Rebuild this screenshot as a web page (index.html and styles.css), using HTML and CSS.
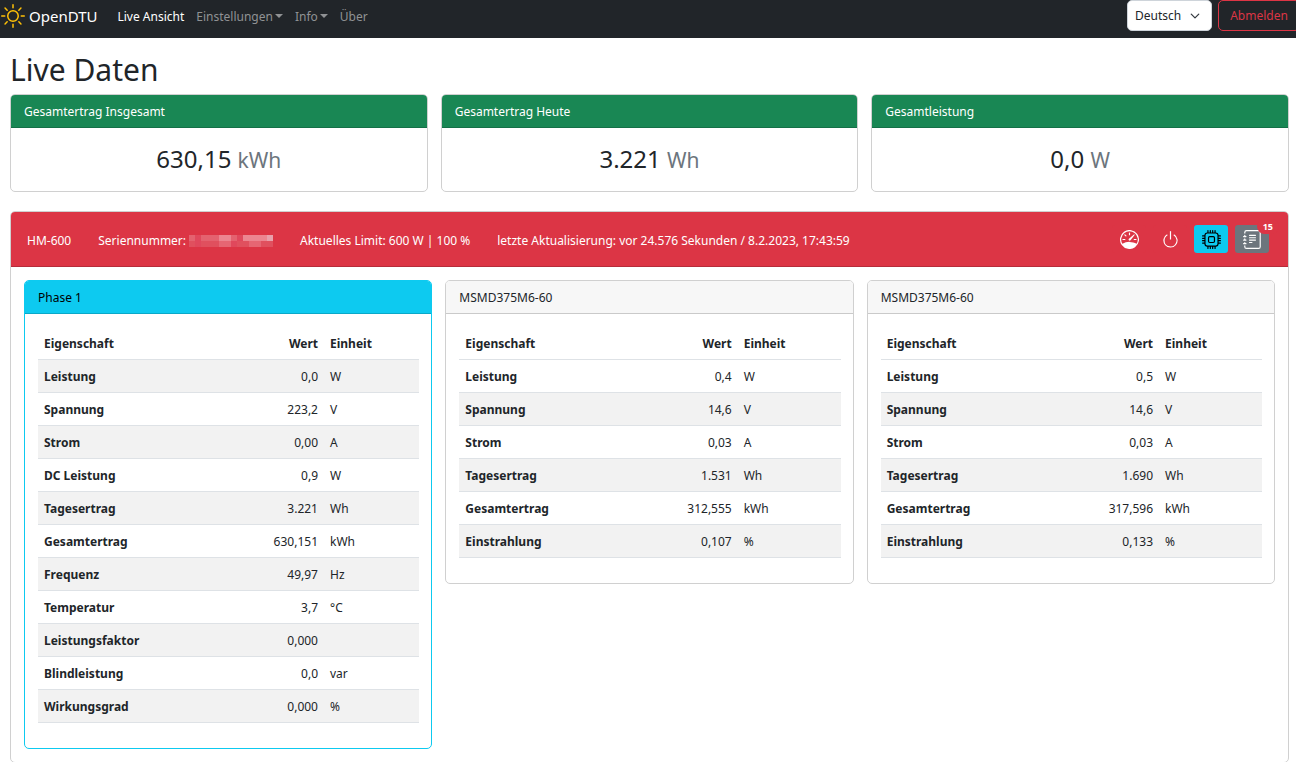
FILE: index.html
```html
<!DOCTYPE html>
<html lang="de">
    <head>
        <meta charset="UTF-8">
        <meta name="viewport" content="width=device-width, initial-scale=1.0">
        <title>OpenDTU</title>
        <link rel="stylesheet" href="styles.css">
    </head>
    <body>
        <nav class="navbar">
            <a class="brand" href="#">
                <svg class="brand-icon" viewBox="0 0 16 16" fill="currentColor" aria-hidden="true">
                    <path d="M8 11a3 3 0 1 1 0-6 3 3 0 0 1 0 6zm0 1a4 4 0 1 0 0-8 4 4 0 0 0 0 8zM8 0a.5.5 0 0 1 .5.5v2a.5.5 0 0 1-1 0v-2A.5.5 0 0 1 8 0zm0 13a.5.5 0 0 1 .5.5v2a.5.5 0 0 1-1 0v-2A.5.5 0 0 1 8 13zm8-5a.5.5 0 0 1-.5.5h-2a.5.5 0 0 1 0-1h2a.5.5 0 0 1 .5.5zM3 8a.5.5 0 0 1-.5.5h-2a.5.5 0 0 1 0-1h2A.5.5 0 0 1 3 8zm10.657-5.657a.5.5 0 0 1 0 .707l-1.414 1.415a.5.5 0 1 1-.707-.708l1.414-1.414a.5.5 0 0 1 .707 0zm-9.193 9.193a.5.5 0 0 1 0 .707L3.05 13.657a.5.5 0 0 1-.707-.707l1.414-1.414a.5.5 0 0 1 .707 0zm9.193 2.121a.5.5 0 0 1-.707 0l-1.414-1.414a.5.5 0 0 1 .707-.707l1.414 1.414a.5.5 0 0 1 0 .707zM4.464 4.465a.5.5 0 0 1-.707 0L2.343 3.05a.5.5 0 1 1 .707-.707l1.414 1.414a.5.5 0 0 1 0 .708z"/>
                </svg>
                OpenDTU
            </a>
            <div class="nav-links">
                <a class="nav-link active" href="#">Live Ansicht</a>
                <a class="nav-link dropdown" href="#">Einstellungen</a>
                <a class="nav-link dropdown" href="#">Info</a>
                <a class="nav-link" href="#">Über</a>
            </div>
            <select class="language" aria-label="Sprache">
                <option>Deutsch</option>
                <option>English</option>
            </select>
            <button class="logout" type="button">Abmelden</button>
        </nav>

        <main class="container">
            <h1>Live Daten</h1>

            <div class="totals">
                <div class="card">
                    <div class="card-header success">Gesamtertrag Insgesamt</div>
                    <h2>630,15 <small>kWh</small></h2>
                </div>
                <div class="card">
                    <div class="card-header success">Gesamtertrag Heute</div>
                    <h2>3.221 <small>Wh</small></h2>
                </div>
                <div class="card">
                    <div class="card-header success">Gesamtleistung</div>
                    <h2>0,0 <small>W</small></h2>
                </div>
            </div>

            <div class="card">
                <div class="inverter-header">
                    <div class="inverter-info">
                        <span>HM-600</span>
                        <span class="serial">Seriennummer:
                            <svg class="serial-mask" viewBox="0 0 14 2" preserveAspectRatio="none" shape-rendering="crispEdges" aria-hidden="true">
                                <path fill="#e4626f" d="M0 0h14v1H0z"/>
                                <path fill="#e0505e" d="M0 1h14v1H0z"/>
                                <path fill="#ec8590" d="M5 0h2v1H5zM9 0h4v1H9z"/>
                                <path fill="#e9a0ab" d="M13 0h1v1h-1z"/>
                                <path fill="#e0485c" d="M1 0h1v1H1zM8 0h1v1H8zM1 1h1v1H1zM7 1h1v1H7z"/>
                                <path fill="#e66673" d="M5 1h2v1H5zM10 1h2v1h-2z"/>
                            </svg>
                        </span>
                        <span>Aktuelles Limit: 600 W | 100 %</span>
                        <span>letzte Aktualisierung: vor 24.576 Sekunden / 8.2.2023, 17:43:59</span>
                    </div>
                    <div class="toolbar">
                        <button class="btn danger" type="button" aria-label="Limit">
                            <svg viewBox="0 0 16 16" fill="currentColor">
                                <path d="M8 2a.5.5 0 0 1 .5.5V4a.5.5 0 0 1-1 0V2.500A.5.5 0 0 1 8 2zM3.732 3.732a.5.5 0 0 1 .707 0l.915.914a.5.5 0 1 1-.708.708l-.914-.915a.5.5 0 0 1 0-.707zM2 8a.5.5 0 0 1 .5-.5h1.586a.5.5 0 0 1 0 1H2.500A.5.5 0 0 1 2 8zm9.500 0a.5.5 0 0 1 .5-.5h1.500a.5.5 0 0 1 0 1H12a.5.5 0 0 1-.5-.5zm.754-4.246a.389.389 0 0 0-.527-.020L7.547 7.310A.910.910 0 1 0 8.850 8.569l3.434-4.297a.389.389 0 0 0-.029-.518z"/>
                                <path fill-rule="evenodd" d="M6.664 15.889A8 8 0 1 1 9.336.110a8 8 0 0 1-2.672 15.780zm-4.665-4.283A11.945 11.945 0 0 1 8 10c2.186 0 4.236.585 6.001 1.606a7 7 0 1 0-12.002 0z"/>
                            </svg>
                        </button>
                        <button class="btn danger" type="button" aria-label="Ein/Aus">
                            <svg viewBox="0 0 16 16" fill="currentColor">
                                <path d="M7.500 1v7h1V1h-1z"/>
                                <path d="M3 8.812a4.999 4.999 0 0 1 2.578-4.375l-.485-.874A6 6 0 1 0 11 3.616l-.501.865A5 5 0 1 1 3 8.812z"/>
                            </svg>
                        </button>
                        <button class="btn info" type="button" aria-label="Geräteinfo">
                            <svg viewBox="0 0 16 16" fill="currentColor">
                                <path d="M5 0a.5.5 0 0 1 .5.5V2h1V.5a.5.5 0 0 1 1 0V2h1V.5a.5.5 0 0 1 1 0V2h1V.5a.5.5 0 0 1 1 0V2A2.500 2.500 0 0 1 14 4.500h1.500a.5.5 0 0 1 0 1H14v1h1.500a.5.5 0 0 1 0 1H14v1h1.500a.5.5 0 0 1 0 1H14v1h1.500a.5.5 0 0 1 0 1H14a2.500 2.500 0 0 1-2.500 2.500v1.500a.5.5 0 0 1-1 0V14h-1v1.500a.5.5 0 0 1-1 0V14h-1v1.500a.5.5 0 0 1-1 0V14h-1v1.500a.5.5 0 0 1-1 0V14A2.500 2.500 0 0 1 2 11.500H.5a.5.5 0 0 1 0-1H2v-1H.5a.5.5 0 0 1 0-1H2v-1H.5a.5.5 0 0 1 0-1H2v-1H.5a.5.5 0 0 1 0-1H2A2.500 2.500 0 0 1 4.500 2V.5A.5.5 0 0 1 5 0zm-.5 3A1.500 1.500 0 0 0 3 4.500v7A1.500 1.500 0 0 0 4.500 13h7a1.500 1.500 0 0 0 1.500-1.500v-7A1.500 1.500 0 0 0 11.500 3h-7zM5 6.500A1.500 1.500 0 0 1 6.500 5h3A1.500 1.500 0 0 1 11 6.500v3A1.500 1.500 0 0 1 9.500 11h-3A1.500 1.500 0 0 1 5 9.500v-3zM6.500 6a.5.5 0 0 0-.5.5v3a.5.5 0 0 0 .5.5h3a.5.5 0 0 0 .5-.5v-3a.5.5 0 0 0-.5-.5h-3z"/>
                            </svg>
                        </button>
                        <button class="btn secondary" type="button" aria-label="Ereignisse">
                            <svg viewBox="0 0 16 16" fill="currentColor">
                                <path d="M5 10.500a.5.5 0 0 1 .5-.5h2a.5.5 0 0 1 0 1h-2a.5.5 0 0 1-.5-.5zm0-2a.5.5 0 0 1 .5-.5h5a.5.5 0 0 1 0 1h-5a.5.5 0 0 1-.5-.5zm0-2a.5.5 0 0 1 .5-.5h5a.5.5 0 0 1 0 1h-5a.5.5 0 0 1-.5-.5zm0-2a.5.5 0 0 1 .5-.5h5a.5.5 0 0 1 0 1h-5a.5.5 0 0 1-.5-.5z"/>
                                <path d="M3 0h10a2 2 0 0 1 2 2v12a2 2 0 0 1-2 2H3a2 2 0 0 1-2-2v-1h1v1a1 1 0 0 0 1 1h10a1 1 0 0 0 1-1V2a1 1 0 0 0-1-1H3a1 1 0 0 0-1 1v1H1V2a2 2 0 0 1 2-2z"/>
                                <path d="M1 5v-.5a.5.5 0 0 1 1 0V5h.5a.5.5 0 0 1 0 1h-2a.5.5 0 0 1 0-1H1zm0 3v-.5a.5.5 0 0 1 1 0V8h.5a.5.5 0 0 1 0 1h-2a.5.5 0 0 1 0-1H1zm0 3v-.5a.5.5 0 0 1 1 0v.5h.5a.5.5 0 0 1 0 1h-2a.5.5 0 0 1 0-1H1z"/>
                            </svg>
                            <span class="badge">15</span>
                        </button>
                    </div>
                </div>

                <div class="channels">
                    <div class="card phase">
                        <div class="card-header">Phase 1</div>
                        <table class="values striped-odd">
                            <thead>
                                <tr><th>Eigenschaft</th><th class="value">Wert</th><th class="unit">Einheit</th></tr>
                            </thead>
                            <tbody>
                                <tr><th>Leistung</th><td class="value">0,0</td><td>W</td></tr>
                                <tr><th>Spannung</th><td class="value">223,2</td><td>V</td></tr>
                                <tr><th>Strom</th><td class="value">0,00</td><td>A</td></tr>
                                <tr><th>DC Leistung</th><td class="value">0,9</td><td>W</td></tr>
                                <tr><th>Tagesertrag</th><td class="value">3.221</td><td>Wh</td></tr>
                                <tr><th>Gesamtertrag</th><td class="value">630,151</td><td>kWh</td></tr>
                                <tr><th>Frequenz</th><td class="value">49,97</td><td>Hz</td></tr>
                                <tr><th>Temperatur</th><td class="value">3,7</td><td>°C</td></tr>
                                <tr><th>Leistungsfaktor</th><td class="value">0,000</td><td></td></tr>
                                <tr><th>Blindleistung</th><td class="value">0,0</td><td>var</td></tr>
                                <tr><th>Wirkungsgrad</th><td class="value">0,000</td><td>%</td></tr>
                            </tbody>
                        </table>
                    </div>

                    <div class="card">
                        <div class="card-header">MSMD375M6-60</div>
                        <table class="values striped-even">
                            <thead>
                                <tr><th>Eigenschaft</th><th class="value">Wert</th><th class="unit">Einheit</th></tr>
                            </thead>
                            <tbody>
                                <tr><th>Leistung</th><td class="value">0,4</td><td>W</td></tr>
                                <tr><th>Spannung</th><td class="value">14,6</td><td>V</td></tr>
                                <tr><th>Strom</th><td class="value">0,03</td><td>A</td></tr>
                                <tr><th>Tagesertrag</th><td class="value">1.531</td><td>Wh</td></tr>
                                <tr><th>Gesamtertrag</th><td class="value">312,555</td><td>kWh</td></tr>
                                <tr><th>Einstrahlung</th><td class="value">0,107</td><td>%</td></tr>
                            </tbody>
                        </table>
                    </div>

                    <div class="card">
                        <div class="card-header">MSMD375M6-60</div>
                        <table class="values striped-even">
                            <thead>
                                <tr><th>Eigenschaft</th><th class="value">Wert</th><th class="unit">Einheit</th></tr>
                            </thead>
                            <tbody>
                                <tr><th>Leistung</th><td class="value">0,5</td><td>W</td></tr>
                                <tr><th>Spannung</th><td class="value">14,6</td><td>V</td></tr>
                                <tr><th>Strom</th><td class="value">0,03</td><td>A</td></tr>
                                <tr><th>Tagesertrag</th><td class="value">1.690</td><td>Wh</td></tr>
                                <tr><th>Gesamtertrag</th><td class="value">317,596</td><td>kWh</td></tr>
                                <tr><th>Einstrahlung</th><td class="value">0,133</td><td>%</td></tr>
                            </tbody>
                        </table>
                    </div>
                </div>
            </div>
        </main>
    </body>
</html>
```
FILE: styles.css
```css
* {
    box-sizing: border-box;
}

body {
    margin: 0;
    font-family: "Noto Sans", "Open Sans", sans-serif;
    font-size: 12px;
    line-height: 20px;
    color: #212529;
    background: #fff;
}

h1, h2 {
    margin: 0;
    font-weight: 400;
}

a {
    text-decoration: none;
}

button, select {
    font: inherit;
}

/* Navigation */

.navbar {
    display: flex;
    align-items: flex-start;
    height: 38px;
    overflow: hidden;
    background: #212529;
}

.brand {
    display: flex;
    align-items: center;
    gap: 4px;
    height: 32px;
    padding-left: 1px;
    font-size: 15px;
    color: #fff;
}

.brand-icon {
    width: 24px;
    height: 24px;
    color: #ffc107;
}

.nav-links {
    display: flex;
    flex: 1;
    gap: 12px;
    padding: 7px 0 0 20px;
}

.nav-link {
    color: #909294;
}

.nav-link.active {
    color: #fff;
}

.dropdown::after {
    content: "";
    display: inline-block;
    margin-left: 2px;
    vertical-align: 3px;
    border-top: 4px solid;
    border-left: 4px solid transparent;
    border-right: 4px solid transparent;
}

.language {
    appearance: none;
    width: 85px;
    height: 31px;
    margin-right: 6px;
    padding: 0 7px;
    border: 1px solid #ced4da;
    border-radius: 5px;
    color: #212529;
    background: #fff url("data:image/svg+xml,%3csvg xmlns='http://www.w3.org/2000/svg' viewBox='0 0 16 16'%3e%3cpath fill='none' stroke='%23343a40' stroke-linecap='round' stroke-linejoin='round' stroke-width='2' d='m2 5 6 6 6-6'/%3e%3c/svg%3e") no-repeat right 11px center / 10px 10px;
}

.logout {
    flex: none;
    width: 82px;
    height: 31px;
    margin-right: -4px;
    padding: 0;
    border: 1px solid #dc3545;
    border-radius: 5px;
    color: #dc3545;
    background: transparent;
}

/* Cards */

.container {
    padding: 12px 7px 0 10px;
}

h1 {
    padding-bottom: 4px;
    font-size: 30px;
    line-height: 40px;
}

.card {
    border: 1px solid #d0d0d0;
    border-radius: 5px;
}

.card-header {
    padding: 7px 13px 5px;
    border-bottom: 1px solid #cacaca;
    border-radius: 4px 4px 0 0;
    background: #f7f7f7;
}

.card-header.success {
    color: #fff;
    background: #198754;
    border-color: #147047;
}

.totals {
    display: grid;
    grid-template-columns: repeat(3, 1fr);
    gap: 13px;
    margin-bottom: 19px;
}

h2 {
    padding: 15px 13px;
    font-size: 24px;
    line-height: 32px;
    text-align: center;
}

h2 small {
    font-size: 21px;
    color: #6c757d;
}

/* Inverter */

.inverter-header {
    display: flex;
    align-items: center;
    justify-content: space-between;
    height: 55px;
    padding: 0 19px 0 16px;
    border-bottom: 1px solid #b62c3a;
    border-radius: 4px 4px 0 0;
    color: #fff;
    background: #dc3545;
}

.inverter-info {
    display: flex;
    gap: 27px;
    padding-top: 3px;
}

.serial {
    display: flex;
    align-items: center;
    gap: 3px;
}

.serial-mask {
    width: 84px;
    height: 12px;
}

.toolbar {
    display: flex;
    gap: 7px;
}

.btn {
    position: relative;
    display: flex;
    align-items: center;
    justify-content: center;
    width: 34px;
    height: 28px;
    padding: 0;
    border: 0;
    border-radius: 3px;
}

.btn svg {
    width: 19px;
    height: 19px;
}

.btn.danger {
    color: #fff;
    background: #dc3545;
}

.btn.info {
    color: #000;
    background: #0dcaf0;
}

.btn.secondary {
    color: #fff;
    background: #6c757d;
}

.badge {
    position: absolute;
    top: -6px;
    right: -10px;
    padding: 3px 6px;
    border-radius: 10px;
    font-size: 9px;
    line-height: 9px;
    font-weight: 700;
    background: #dc3545;
}

/* Channels */

.channels {
    display: grid;
    grid-template-columns: repeat(3, 1fr);
    align-items: start;
    gap: 13px;
    padding: 13px;
}

.card.phase {
    border-color: #0dcaf0;
}

.phase .card-header {
    color: #000;
    background: #0dcaf0;
    border-color: #0aa8c8;
}

.values {
    width: calc(100% - 25px);
    margin: 13px 12px 25px 13px;
    border-collapse: collapse;
    text-align: left;
}

.values th, .values td {
    padding: 7px 6px 5px;
    border-bottom: 1px solid #dee2e6;
}

.values .value {
    text-align: right;
}

.values .unit {
    width: 27%;
}

.phase .unit {
    width: 25%;
}

.striped-odd tbody tr:nth-child(odd), .striped-even tbody tr:nth-child(even) {
    background: #f2f2f2;
}
```
